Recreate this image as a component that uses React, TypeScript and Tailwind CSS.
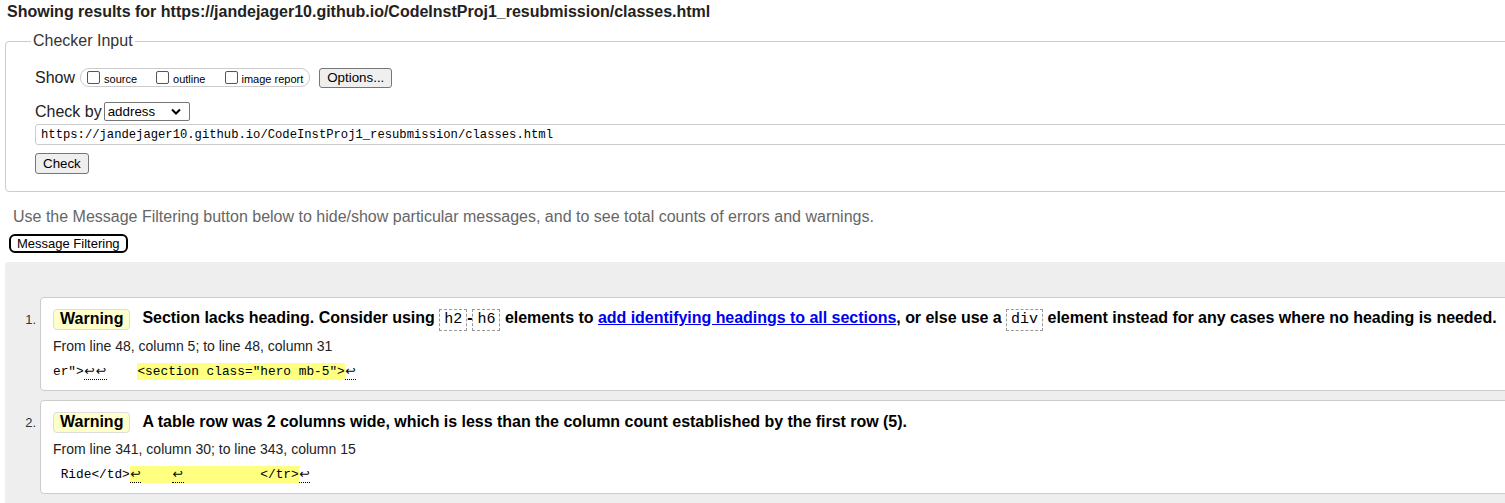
import React from 'react';

const mono = "font-['Liberation_Mono','DejaVu_Sans_Mono',monospace]";

const CheckBox: React.FC<{ className?: string }> = ({ className = '' }) => (
  <span className={`inline-block w-[13px] h-[13px] border border-[#555] rounded-[2px] bg-white ${className}`} />
);

const Ret: React.FC<{ n?: number }> = ({ n = 1 }) => (
  <span className="flex h-[17px] border-b border-dotted border-black font-['DejaVu_Sans',sans-serif] text-[12.5px] leading-[15px]">
    {Array.from({ length: n }).map((_, i) => (
      <span key={i} className="w-[11.5px] text-center">
        ↩
      </span>
    ))}
  </span>
);

const Code: React.FC<{ children: React.ReactNode }> = ({ children }) => (
  <code className={`inline-block leading-[20px] border border-dashed border-[#999] px-[4px] text-[15px] font-normal tracking-normal ${mono}`}>
    {children}
  </code>
);

interface MessageProps {
  num: number;
  title: React.ReactNode;
  location: string;
  extract: React.ReactNode;
  className?: string;
}

const Message: React.FC<MessageProps> = ({ num, title, location, extract, className = '' }) => (
  <li className={`flex ${className}`}>
    <div className="w-[35px] shrink-0 pr-[4px] pt-[12px] text-right text-[13px] leading-[22px] text-[#333]">
      {num}.
    </div>
    <div className="flex-1 bg-white border border-[#ccc] rounded-[4px] pl-[12px] pt-[10px] pb-[10px]">
      <div className="flex items-center h-[22px]">
        <span className="inline-flex items-center h-[21px] px-[6px] border border-[#ddd] rounded-[4px] bg-[#ffffcc] text-[16px] font-bold">
          Warning
        </span>
        <span className="ml-[12px] text-[16px] leading-[22px] font-bold tracking-[-0.03px] whitespace-nowrap">{title}</span>
      </div>
      <div className="mt-[7px] text-[14px] leading-[18px] text-[#222]">{location}</div>
      <div className={`mt-[8px] flex h-[17px] whitespace-pre text-[12.8px] leading-[17px] ${mono}`}>{extract}</div>
    </div>
  </li>
);

export default function App() {
  return (
    <div className="w-[1505px] h-[503px] overflow-hidden bg-white text-black font-['Liberation_Sans',Arial,sans-serif]">
      <div className="w-[1600px]">
        <h2 className="pt-[3px] pl-[7px] text-[16px] leading-[18px] font-bold text-[#222]">
          Showing results for https://jandejager10.github.io/CodeInstProj1_resubmission/classes.html
        </h2>

        <fieldset className="mt-[11px] mx-[5px] border border-[#ccc] rounded-[4px] pl-[29px] pr-[10px] pb-[17px]">
          <legend className="ml-[-4px] px-[2px] text-[16px] leading-[18px] text-[#333]">Checker Input</legend>

          <div className="mt-[17px] flex items-center h-[21px]">
            <span className="text-[16px] leading-[18px] text-[#222]">Show</span>
            <div className="ml-[5px] flex items-center h-[19px] border border-[#ccc] rounded-[9px] pl-[6px] pr-[6px]">
              <CheckBox />
              <span className="ml-[4px] pt-[3px] text-[11px] leading-[13px]">source</span>
              <CheckBox className="ml-[19px]" />
              <span className="ml-[4px] pt-[3px] text-[11px] leading-[13px]">outline</span>
              <CheckBox className="ml-[20px]" />
              <span className="ml-[3px] pt-[3px] text-[11px] leading-[13px]">image report</span>
            </div>
            <button className="ml-[9px] h-[20px] px-[7px] border border-[#767676] rounded-[3px] bg-[#efefef] text-[13.33px] leading-[16px]">
              Options...
            </button>
          </div>

          <div className="mt-[14px] flex items-center h-[19px]">
            <span className="text-[16px] leading-[18px] text-[#222]">Check by</span>
            <div className="ml-[2px] flex items-center w-[86px] h-[19px] border border-[#767676] rounded-[2px] pl-[3px] text-[13.33px] leading-[16px]">
              address
              <svg className="ml-auto mr-[8px]" width="10" height="7" viewBox="0 0 10 7" fill="none">
                <path d="M1 1.5l4 4 4-4" stroke="#000" strokeWidth="2" />
              </svg>
            </div>
          </div>

          <input
            readOnly
            defaultValue="https://jandejager10.github.io/CodeInstProj1_resubmission/classes.html"
            className={`mt-[3px] block w-full h-[21px] border border-[#ccc] rounded-[3px] pl-[5px] text-[12.2px] outline-none ${mono}`}
          />

          <button className="mt-[8px] block h-[21px] px-[7px] border border-[#767676] rounded-[3px] bg-[#efefef] text-[13.33px] leading-[16px]">
            Check
          </button>
        </fieldset>

        <p className="mt-[16px] ml-[13px] text-[16px] leading-[18px] text-[#666]">
          Use the Message Filtering button below to hide/show particular messages, and to see total counts of errors
          and warnings.
        </p>
        <button className="mt-[8px] ml-[9px] block h-[19px] px-[6px] border-2 border-black rounded-[6px] bg-white text-[13px] leading-[15px]">
          Message Filtering
        </button>

        <div className="mt-[9px] ml-[5px] bg-[#eee] rounded-tl-[4px] pt-[35px] pb-[30px]">
          <ol>
            <Message
              num={1}
              title={
                <>
                  Section lacks heading. Consider using <Code>h2</Code>-<Code>h6</Code> elements to{' '}
                  <a className="text-[#0000ee] underline">add identifying headings to all sections</a>, or else use a{' '}
                  <Code>div</Code> element instead for any cases where no heading is needed.
                </>
              }
              location="From line 48, column 5; to line 48, column 31"
              extract={
                <>
                  <span>er"&gt;</span>
                  <Ret n={2} />
                  <span>{'    '}</span>
                  <span className="bg-[#ffff80]">&lt;section class="hero mb-5"&gt;</span>
                  <Ret />
                </>
              }
            />
            <Message
              num={2}
              className="mt-[9px]"
              title="A table row was 2 columns wide, which is less than the column count established by the first row (5)."
              location="From line 341, column 30; to line 343, column 15"
              extract={
                <>
                  <span>{' Ride</td>'}</span>
                  <span className="flex bg-[#ffff80]">
                    <Ret />
                    <span>{'    '}</span>
                    <Ret />
                    <span>{'          </tr>'}</span>
                  </span>
                  <Ret />
                </>
              }
            />
          </ol>
        </div>
      </div>
    </div>
  );
}
